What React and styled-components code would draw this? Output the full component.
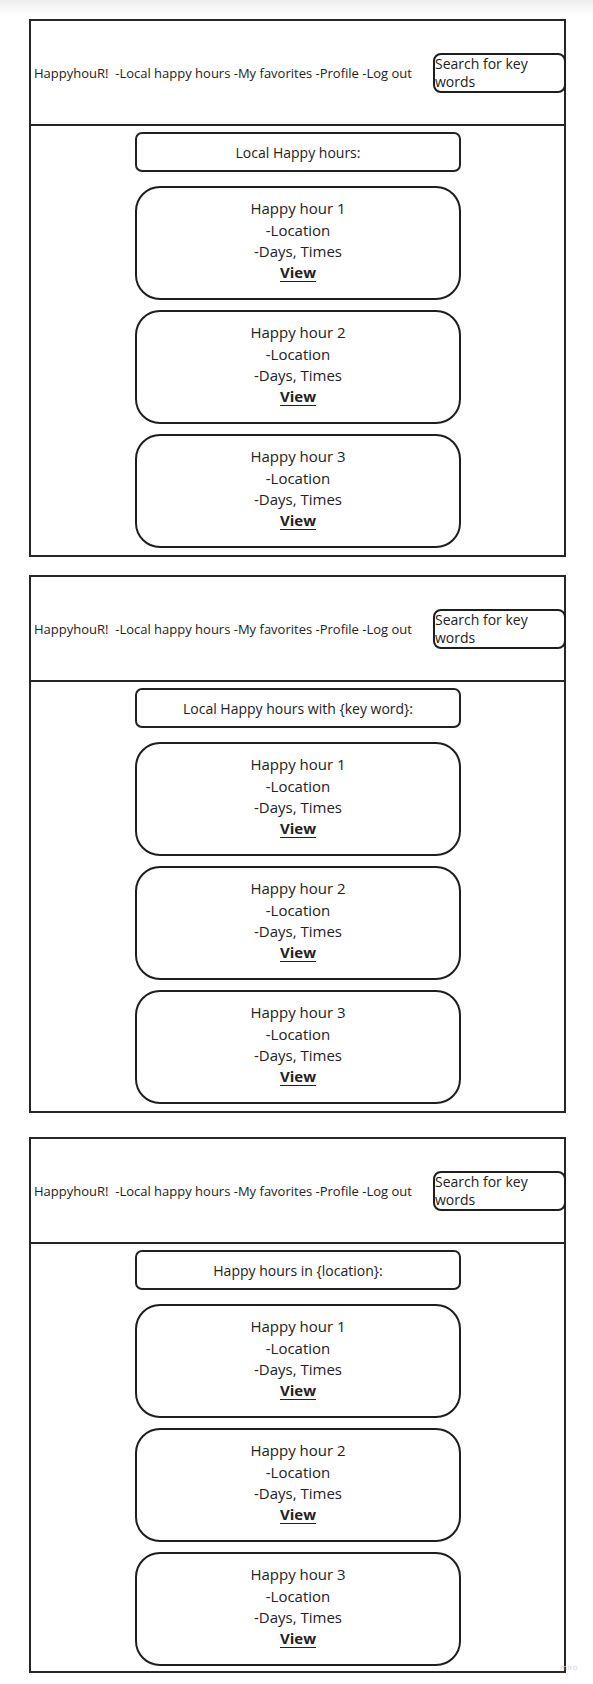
import React from 'react';
import styled, { createGlobalStyle } from 'styled-components';

const GlobalStyles = createGlobalStyle`
  * {
    box-sizing: border-box;
    margin: 0;
    padding: 0;
  }

  body {
    background: #fff;
    font-family: 'Open Sans', 'Noto Sans', sans-serif;
    color: #222;
  }
`;

const Page = styled.div`
  position: relative;
  width: 593px;
  min-height: 1684px;
  padding: 19px 0 0 29px;
  background: linear-gradient(to bottom, #ececec 0px, #f7f7f7 8px, #fff 18px);
`;

const Frame = styled.div`
  width: 537px;
  height: ${(p) => p.h}px;
  margin-bottom: ${(p) => p.gap}px;
  border: 2px solid #262626;
  display: flex;
  flex-direction: column;
  background: #fff;
`;

const Header = styled.div`
  height: 105px;
  flex-shrink: 0;
  border-bottom: 2px solid #262626;
  display: flex;
  align-items: center;
  justify-content: space-between;
  padding-left: 3px;
`;

const NavText = styled.p`
  font-size: 13px;
  color: #222;
  white-space: pre;
`;

const SearchBox = styled.div`
  width: 133px;
  height: 40px;
  margin-right: -2px;
  border: 2px solid #1e1e1e;
  border-radius: 8px;
  font-size: 14px;
  line-height: 18px;
  color: #222;
`;

const Body = styled.div`
  flex: 1;
  display: flex;
  flex-direction: column;
  align-items: center;
  padding: 6px 0 0 1px;
`;

const TitleBox = styled.div`
  width: 326px;
  height: 40px;
  border: 2px solid #222;
  border-radius: 7px;
  display: flex;
  align-items: center;
  justify-content: center;
  font-size: 14px;
  color: #222;
  margin-bottom: 14px;
`;

const Card = styled.div`
  width: 326px;
  height: 114px;
  border: 2px solid #1e1e1e;
  border-radius: 25px;
  padding-top: 10px;
  margin-bottom: 10px;
  display: flex;
  flex-direction: column;
  align-items: center;
  font-size: 15px;
  line-height: 21.5px;
  color: #222;
`;

const ViewLink = styled.a`
  font-weight: 700;
  color: #222;
  text-decoration: underline;
  text-underline-offset: 3px;
  line-height: 19px;
`;

const Watermark = styled.span`
  position: absolute;
  left: 560px;
  top: 1661px;
  font-size: 8px;
  color: #d6d6d6;
`;

const frames = [
  { title: 'Local Happy hours:', h: 538, gap: 18 },
  { title: 'Local Happy hours with {key word}:', h: 538, gap: 24 },
  { title: 'Happy hours in {location}:', h: 536, gap: 0 },
];

function HappyCard({ n }) {
  return (
    <Card>
      <span>Happy hour {n}</span>
      <span>-Location</span>
      <span>-Days, Times</span>
      <ViewLink>View</ViewLink>
    </Card>
  );
}

function App() {
  return (
    <div>
      <GlobalStyles />
      <Page>
        {frames.map((f) => (
          <Frame key={f.title} h={f.h} gap={f.gap}>
            <Header>
              <NavText>HappyhouR!  -Local happy hours -My favorites -Profile -Log out</NavText>
              <SearchBox>Search for key words</SearchBox>
            </Header>
            <Body>
              <TitleBox>{f.title}</TitleBox>
              <HappyCard n={1} />
              <HappyCard n={2} />
              <HappyCard n={3} />
            </Body>
          </Frame>
        ))}
        <Watermark>miro</Watermark>
      </Page>
    </div>
  );
}

export default App;
